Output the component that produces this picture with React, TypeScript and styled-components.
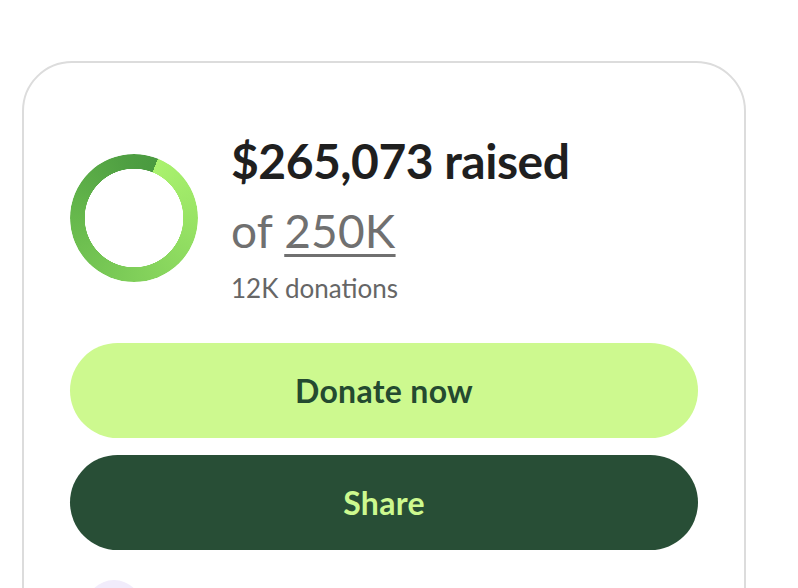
import React from "react";
import styled, { createGlobalStyle } from "styled-components";

const Global = createGlobalStyle`
  html, body { margin: 0; padding: 0; background: #ffffff; }
  body { font-family: Lato, "Noto Sans", sans-serif; overflow: hidden; }
`;

const Page = styled.div`
  padding: 61px 0 0 22px;
  height: 588px;
  box-sizing: border-box;
  overflow: hidden;
`;

const Card = styled.section`
  width: 724px;
  box-sizing: border-box;
  border: 2px solid #dcdcdc;
  border-radius: 50px;
  padding: 70px 46px 40px;
  display: flex;
  flex-direction: column;
  gap: 17px;
  background: #fff;
`;

const Summary = styled.div`
  display: flex;
  align-items: flex-start;
  gap: 33px;
  margin-bottom: 21px;
`;

const Ring = styled.div<{ $size: number; $stroke: number }>`
  width: ${(p) => p.$size}px;
  height: ${(p) => p.$size}px;
  flex: none;
  margin-top: 21px;
  border-radius: 50%;
  background: conic-gradient(
    from 22deg,
    #aaf26e 0deg,
    #98e365 70deg,
    #7fce59 160deg,
    #66b84c 250deg,
    #4f9f42 330deg,
    #4a9a40 360deg
  );
  -webkit-mask: radial-gradient(
    farthest-side,
    transparent calc(100% - ${(p) => p.$stroke}px),
    #000 calc(100% - ${(p) => p.$stroke - 0.5}px)
  );
  mask: radial-gradient(
    farthest-side,
    transparent calc(100% - ${(p) => p.$stroke}px),
    #000 calc(100% - ${(p) => p.$stroke - 0.5}px)
  );
`;

const Figures = styled.div`
  display: flex;
  flex-direction: column;
`;

const Raised = styled.div`
  font-size: 48px;
  font-weight: 700;
  color: #1f1f1f;
  line-height: 56px;
  letter-spacing: -0.5px;
`;

const Goal = styled.div`
  font-size: 46px;
  font-weight: 400;
  color: #707070;
  line-height: 60px;
  margin-top: 12px;
  letter-spacing: 0.2px;
`;

const GoalLink = styled.span`
  text-decoration: underline;
  text-decoration-thickness: 3px;
  text-underline-offset: 6px;
`;

const Count = styled.div`
  font-size: 26px;
  color: #666666;
  line-height: 34px;
  margin-top: 10px;
`;

const Button = styled.button<{ $variant: "primary" | "secondary" }>`
  width: 100%;
  height: 95px;
  border: none;
  border-radius: 48px;
  font-family: Lato, "Noto Sans", sans-serif;
  font-size: 32px;
  font-weight: 700;
  letter-spacing: 0.3px;
  cursor: pointer;
  background: ${(p) => (p.$variant === "primary" ? "#cdf98f" : "#284e36")};
  color: ${(p) => (p.$variant === "primary" ? "#244a30" : "#cdf98f")};
`;

const Donor = styled.div`
  display: flex;
  align-items: center;
  gap: 16px;
  margin-top: 13px;
  padding-left: 16px;
`;

const Avatar = styled.div`
  width: 56px;
  height: 56px;
  border-radius: 50%;
  background: #f1ecfb;
`;

export default function App() {
  return (
    <>
      <Global />
      <Page>
        <Card>
          <Summary>
            <Ring $size={128} $stroke={15} />
            <Figures>
              <Raised>$265,073 raised</Raised>
              <Goal>
                of <GoalLink>250K</GoalLink>
              </Goal>
              <Count>12K donations</Count>
            </Figures>
          </Summary>
          <Button $variant="primary">Donate now</Button>
          <Button $variant="secondary">Share</Button>
          <Donor>
            <Avatar />
          </Donor>
        </Card>
      </Page>
    </>
  );
}
